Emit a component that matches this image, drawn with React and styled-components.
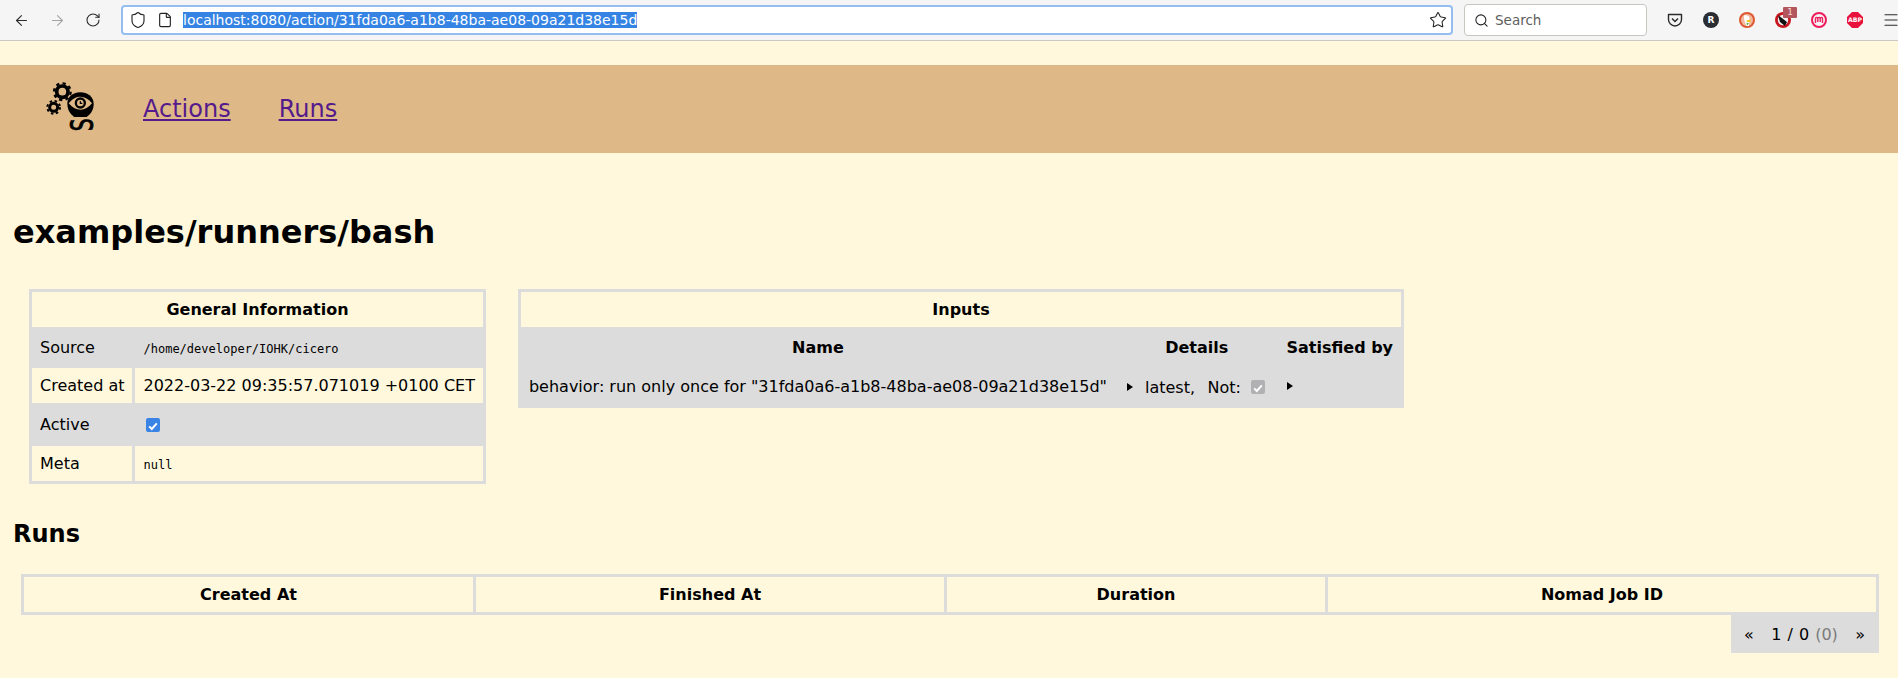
import React from 'react';
import styled, { createGlobalStyle } from 'styled-components';
import { ArrowLeft, ArrowRight, RotateCw, Shield, File, Star, Search, Menu } from 'lucide-react';

const cream = '#fff8dc';
const grey = '#dcdcdc';

const GlobalStyle = createGlobalStyle`
  html, body {
    margin: 0;
    padding: 0;
    background: ${cream};
    color: #000;
    font-family: "DejaVu Sans", sans-serif;
    font-size: 16px;
  }
  body {
    width: 1898px;
    height: 678px;
    overflow: hidden;
  }
`;

const Logo = () => (
  <LogoSvg viewBox="0 12 240 210">
    <circle cx="97" cy="65" r="17" fill="none" stroke="#000" strokeWidth="11" />
    <circle cx="97" cy="65" r="25" fill="none" stroke="#000" strokeWidth="7" strokeDasharray="9.8 9.8" />
    <circle cx="71" cy="112" r="12" fill="none" stroke="#000" strokeWidth="9" />
    <circle cx="71" cy="112" r="19" fill="none" stroke="#000" strokeWidth="6" strokeDasharray="7.5 7.5" />
    <path d="M112 100C112 80 130 67 151 67C172 67 191 80 191 102C191 120 182 132 170 141L133 141C120 132 112 120 112 100Z" fill="#000" />
    <path d="M116 100C128 85 140 80 151 80C164 80 176 87 186 100C176 113 164 119 151 119C140 119 128 114 116 100Z" fill="#deb887" />
    <circle cx="151" cy="99" r="17" fill="#000" />
    <circle cx="151" cy="99" r="10" fill="#deb887" />
    <path d="M151 93V100H157" fill="none" stroke="#000" strokeWidth="3.5" />
    <LogoLetter transform="translate(190 184) rotate(-90) scale(0.62 1)">S</LogoLetter>
  </LogoSvg>
);

const Checkbox = ({ disabled }) => (
  <CheckBox $disabled={disabled}>
    <svg width="100%" height="100%" viewBox="0 0 14 14">
      <path d="M3.2 7.4L5.8 10L10.8 4.4" fill="none" stroke="#fff" strokeWidth="2" />
    </svg>
  </CheckBox>
);

const Toolbar = () => (
  <BrowserBar>
    <NavButton><ArrowLeft size={17} strokeWidth={1.5} /></NavButton>
    <NavButton $muted><ArrowRight size={17} strokeWidth={1.5} /></NavButton>
    <NavButton><RotateCw size={16} strokeWidth={1.6} /></NavButton>
    <UrlBar>
      <UrlIcon $width={28}><Shield size={18} strokeWidth={1.5} /></UrlIcon>
      <UrlIcon $width={24}><File size={16} strokeWidth={1.7} /></UrlIcon>
      <UrlText>localhost:8080/action/31fda0a6-a1b8-48ba-ae08-09a21d38e15d</UrlText>
      <StarButton><Star size={18} strokeWidth={1.4} /></StarButton>
    </UrlBar>
    <SearchBox>
      <Search size={15} strokeWidth={1.7} />
      <SearchLabel>Search</SearchLabel>
    </SearchBox>
    <ExtButton>
      <svg width="16" height="16" viewBox="0 0 16 16">
        <path d="M1.5 2.5H14.5V7.5C14.5 11 11.5 14 8 14C4.5 14 1.5 11 1.5 7.5Z" fill="none" stroke="#2b2b2b" strokeWidth="1.4" strokeLinejoin="round" />
        <path d="M5 6.5L8 9.5L11 6.5" fill="none" stroke="#2b2b2b" strokeWidth="1.5" />
      </svg>
    </ExtButton>
    <ExtButton>
      <RoundBadge $bg="#2a2e33">R</RoundBadge>
    </ExtButton>
    <ExtButton>
      <svg width="16" height="16" viewBox="0 0 16 16">
        <circle cx="8" cy="8" r="8" fill="#de5833" />
        <circle cx="8" cy="8" r="6" fill="#f2b8a0" />
        <path d="M5 3.5C8 2.5 11 4 10.5 7L10 14H7.5C6 11 4.5 7 5 3.5Z" fill="#fff" />
        <path d="M7.5 8.5L11.5 7.5L11.5 10L8 10Z" fill="#f5c518" />
        <path d="M7.5 10.5L10 11.5L8 13.5Z" fill="#5fa83a" />
      </svg>
    </ExtButton>
    <ExtButton>
      <svg width="16" height="16" viewBox="0 0 16 16">
        <circle cx="8" cy="8" r="8" fill="#c8171f" />
        <circle cx="8" cy="8" r="5.2" fill="#f3f3f3" />
        <path d="M3 3L12 10L10 14L5 10Z" fill="#111" />
      </svg>
      <CountBadge>1</CountBadge>
    </ExtButton>
    <ExtButton>
      <svg width="16" height="16" viewBox="0 0 16 16">
        <circle cx="8" cy="8" r="7" fill="none" stroke="#ee1c5b" strokeWidth="2" />
        <path d="M4.5 11V6.5C4.5 5 6.5 5 6.8 6.5V10M6.8 6.5C7.2 5 9.2 5 9.2 6.5V10M9.2 6.5C9.6 5 11.5 5 11.5 6.5V11" fill="none" stroke="#ee1c5b" strokeWidth="1.4" />
      </svg>
    </ExtButton>
    <ExtButton>
      <svg width="16" height="16" viewBox="0 0 16 16">
        <path d="M5 0H11L16 5V11L11 16H5L0 11V5Z" fill="#e8123c" />
        <AbpText x="8" y="10.4" textAnchor="middle">ABP</AbpText>
      </svg>
    </ExtButton>
    <ExtButton><Menu size={18} strokeWidth={1.5} /></ExtButton>
  </BrowserBar>
);

const GeneralInformation = () => (
  <InfoTable>
    <thead>
      <tr><HeadCell colSpan={2}>General Information</HeadCell></tr>
    </thead>
    <tbody>
      <Row $shaded><Cell>Source</Cell><Cell><Mono>/home/developer/IOHK/cicero</Mono></Cell></Row>
      <Row><Cell>Created at</Cell><Cell>2022-03-22 09:35:57.071019 +0100 CET</Cell></Row>
      <Row $shaded><Cell>Active</Cell><Cell><Checkbox /></Cell></Row>
      <Row><Cell>Meta</Cell><Cell><Mono>null</Mono></Cell></Row>
    </tbody>
  </InfoTable>
);

const Inputs = () => (
  <InputsTable>
    <thead>
      <tr><HeadCell colSpan={3}>Inputs</HeadCell></tr>
    </thead>
    <tbody>
      <Row $shaded>
        <HeadCell as="td">Name</HeadCell>
        <HeadCell as="td">Details</HeadCell>
        <HeadCell as="td">Satisfied by</HeadCell>
      </Row>
      <Row $shaded>
        <Cell>behavior: run only once for "31fda0a6-a1b8-48ba-ae08-09a21d38e15d"</Cell>
        <Cell>
          <Marker />latest,<NotLabel>Not:</NotLabel><Checkbox disabled />
        </Cell>
        <Cell><Marker /></Cell>
      </Row>
    </tbody>
  </InputsTable>
);

const runColumns = [
  ['Created At', 452],
  ['Finished At', 471],
  ['Duration', 381],
  ['Nomad Job ID', 551],
];

const App = () => (
  <>
    <GlobalStyle />
    <Toolbar />
    <Banner>
      <Logo />
      <NavLink href="#actions">Actions</NavLink>
      <NavLink href="#runs">Runs</NavLink>
    </Banner>
    <Main>
      <Title>examples/runners/bash</Title>
      <TablesRow>
        <GeneralInformation />
        <Inputs />
      </TablesRow>
      <SectionTitle>Runs</SectionTitle>
      <RunsSection>
        <RunsTable>
          <thead>
            <tr>
              {runColumns.map(([label, width]) => (
                <HeadCell key={label} $width={width}>{label}</HeadCell>
              ))}
            </tr>
          </thead>
        </RunsTable>
        <Pagination>
          <PageArrow>«</PageArrow>
          <PageCount>1 / 0 <PageTotal>(0)</PageTotal></PageCount>
          <PageArrow>»</PageArrow>
        </Pagination>
      </RunsSection>
    </Main>
  </>
);

export default App;

const BrowserBar = styled.div`
  display: flex;
  align-items: center;
  height: 40px;
  padding-left: 3px;
  background: #f5f5f5;
  border-bottom: 1px solid #c8c8c8;
  overflow: hidden;
`;

const NavButton = styled.div`
  display: flex;
  align-items: center;
  justify-content: center;
  width: 36px;
  flex-shrink: 0;
  color: ${(p) => (p.$muted ? '#a3a3a3' : '#2b2b2b')};
`;

const UrlBar = styled.div`
  display: flex;
  align-items: center;
  box-sizing: border-box;
  width: 1332px;
  height: 30px;
  margin: 0 11px 0 10px;
  padding-left: 1px;
  flex-shrink: 0;
  background: #fff;
  border: 2px solid #94bdf0;
  border-radius: 4px;
`;

const UrlIcon = styled.div`
  display: flex;
  align-items: center;
  justify-content: center;
  width: ${(p) => p.$width}px;
  margin-left: ${(p) => (p.$width === 28 ? 0 : 1)}px;
  color: #222;
`;

const UrlText = styled.span`
  margin-left: 6px;
  background: #3584e4;
  color: #fff;
  font-size: 14px;
  line-height: 16px;
  white-space: nowrap;
`;

const StarButton = styled.div`
  display: flex;
  margin-left: auto;
  margin-right: 4px;
  color: #222;
`;

const SearchBox = styled.div`
  display: flex;
  align-items: center;
  box-sizing: border-box;
  width: 183px;
  height: 32px;
  margin-right: 10px;
  padding-left: 9px;
  flex-shrink: 0;
  background: #fff;
  border: 1px solid #c9c6c2;
  border-radius: 4px;
  color: #222;
`;

const SearchLabel = styled.span`
  margin-left: 6px;
  color: #5e5e5e;
  font-size: 13.5px;
`;

const ExtButton = styled.div`
  position: relative;
  display: flex;
  align-items: center;
  justify-content: center;
  width: 36px;
  height: 32px;
  flex-shrink: 0;
  color: #2b2b2b;
`;

const RoundBadge = styled.span`
  display: flex;
  align-items: center;
  justify-content: center;
  width: 16px;
  height: 16px;
  border-radius: 50%;
  background: ${(p) => p.$bg};
  color: #fff;
  font-size: 9px;
  font-weight: bold;
`;

const CountBadge = styled.span`
  position: absolute;
  top: 3px;
  left: 18px;
  width: 14px;
  height: 11px;
  border-radius: 1px;
  background: #b3555c;
  color: #f0d8d8;
  font-size: 9px;
  line-height: 11px;
  text-align: center;
`;

const AbpText = styled.text`
  fill: #fff;
  font-family: "DejaVu Sans", sans-serif;
  font-size: 6.2px;
  font-weight: bold;
`;

const Banner = styled.div`
  display: flex;
  align-items: center;
  height: 88px;
  margin-top: 24px;
  padding-left: 30px;
  background: #deb887;
`;

const LogoSvg = styled.svg`
  width: 80px;
  height: 70px;
  margin-right: 33px;
  flex-shrink: 0;
`;

const LogoLetter = styled.text`
  fill: #000;
  stroke: #000;
  stroke-width: 2.5px;
  font-family: "DejaVu Sans", sans-serif;
  font-size: 98px;
`;

const NavLink = styled.a`
  margin-right: 48px;
  color: #551a8b;
  font-size: 24px;
`;

const Main = styled.main`
  padding: 0 19px 0 24px;
`;

const Title = styled.h1`
  margin: 60px 0 38px -11px;
  font-size: 32px;
  line-height: 38px;
`;

const TablesRow = styled.div`
  display: flex;
  align-items: flex-start;
  gap: 32px;
  margin-left: 5px;
`;

const BaseTable = styled.table`
  border-collapse: collapse;
  border: 3px solid ${grey};
  font-size: 16px;
`;

const InfoTable = styled(BaseTable)`
  flex-shrink: 0;
`;

const InputsTable = styled(BaseTable)`
  flex-shrink: 0;
`;

const RunsTable = styled(BaseTable)`
  table-layout: fixed;
  width: 100%;
`;

const HeadCell = styled.th`
  box-sizing: border-box;
  padding: 8px;
  border: 3px solid ${grey};
  font-weight: bold;
  line-height: 19px;
  text-align: center;
  ${(p) => p.$width && `width: ${p.$width}px;`}
`;

const Row = styled.tr`
  background: ${(p) => (p.$shaded ? grey : 'transparent')};
`;

const Cell = styled.td`
  padding: 8px;
  border: 3px solid ${grey};
  line-height: 19px;
  white-space: nowrap;
`;

const Mono = styled.code`
  font-family: "DejaVu Sans Mono", monospace;
  font-size: 12px;
  line-height: 1;
`;

const CheckBox = styled.span`
  display: inline-block;
  box-sizing: border-box;
  width: 14px;
  height: 14px;
  margin: 4px 2.5px 0 3px;
  vertical-align: -2px;
  border-radius: 2px;
  background: ${(p) => (p.$disabled ? '#b1b1b3' : '#3a84e6')};
`;

const Marker = styled.span`
  display: inline-block;
  width: 0;
  height: 0;
  margin: 0 12px 2px 1px;
  border-left: 6px solid #000;
  border-top: 4px solid transparent;
  border-bottom: 4px solid transparent;
`;

const NotLabel = styled.span`
  margin: 0 7px 0 12.5px;
`;

const SectionTitle = styled.h2`
  margin: 36px 0 26px -11px;
  font-size: 24px;
  line-height: 28px;
`;

const RunsSection = styled.section`
  display: flex;
  flex-direction: column;
  align-items: flex-end;
`;

const Pagination = styled.div`
  display: flex;
  align-items: center;
  box-sizing: border-box;
  width: 148px;
  height: 38px;
  padding: 0 14px 0 13px;
  background: ${grey};
`;

const PageArrow = styled.span`
  font-size: 16px;
`;

const PageCount = styled.span`
  margin: 0 auto;
  word-spacing: 1px;
`;

const PageTotal = styled.span`
  color: #7a7a7a;
`;
